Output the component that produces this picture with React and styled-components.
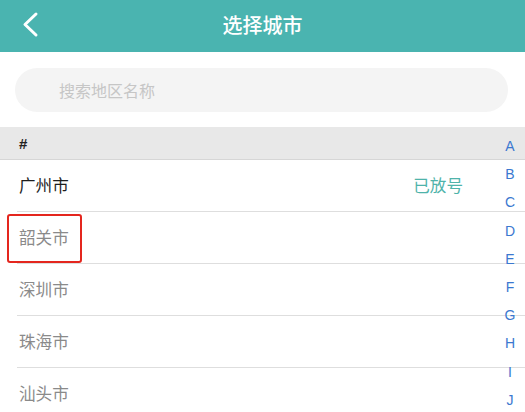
import React from "react";
import styled, { createGlobalStyle } from "styled-components";

const GlobalStyle = createGlobalStyle`
  html, body {
    margin: 0;
    padding: 0;
    background: #fff;
    font-family: "Noto Sans CJK SC", "Noto Sans", sans-serif;
  }
`;

const Page = styled.div`
  position: relative;
  width: 525px;
  height: 412px;
  overflow: hidden;
  background: #fff;
`;

const Header = styled.div`
  height: 52px;
  background: #4ab4b0;
  display: flex;
  align-items: center;
  justify-content: center;
  position: relative;
`;

const BackButton = styled.div`
  position: absolute;
  left: 20px;
  top: 10px;
  width: 22px;
  height: 30px;
`;

const Title = styled.h1`
  margin: 0;
  color: #fff;
  font-size: 20px;
  font-weight: 500;
  line-height: 1;
  padding-bottom: 2px;
`;

const SearchWrap = styled.div`
  padding: 16px 17px 15px 15px;
`;

const SearchBox = styled.div`
  height: 44px;
  border-radius: 22px;
  background: #f4f4f4;
  display: flex;
  align-items: center;
  padding-left: 44px;
  color: #c6c6c6;
  font-size: 16px;
`;

const SectionHeader = styled.div`
  height: 32px;
  background: #e8e8e8;
  border-bottom: 1px solid #d6d6d6;
  display: flex;
  align-items: center;
  padding-left: 19px;
  font-family: "Liberation Sans", sans-serif;
  font-weight: bold;
  font-size: 15px;
  color: #222;
`;

const Row = styled.div`
  position: relative;
  height: 51px;
  margin-left: 17px;
  border-bottom: 1px solid #dedede;
  display: flex;
  align-items: center;
  justify-content: space-between;
  padding-right: 62px;
`;

const CityName = styled.span`
  font-size: 16.6px;
  line-height: 20px;
  margin-left: 2px;
  margin-bottom: 2px;
  color: ${(p) => (p.$active ? "#1e1e1e" : "#8a8a8a")};
`;

const Highlight = styled.span`
  position: absolute;
  left: -10px;
  top: 2px;
  width: 75px;
  height: 49px;
  box-sizing: border-box;
  border: 2.5px solid #e4261e;
  border-radius: 3px;
`;

const Status = styled.span`
  font-size: 16.6px;
  line-height: 20px;
  margin-bottom: 2px;
  color: #4fb3aa;
`;

const IndexBar = styled.div`
  position: absolute;
  right: 5px;
  top: 132px;
  width: 20px;
  display: flex;
  flex-direction: column;
  align-items: center;
`;

const IndexLetter = styled.span`
  height: 28.2px;
  line-height: 28px;
  font-family: "Liberation Sans", sans-serif;
  font-size: 14px;
  color: #3b78d0;
`;

const cities = [
  { name: "广州市", status: "已放号", active: true },
  { name: "韶关市", highlight: true },
  { name: "深圳市" },
  { name: "珠海市" },
  { name: "汕头市" },
];

const letters = ["A", "B", "C", "D", "E", "F", "G", "H", "I", "J"];

const App = () => {
  return (
    <Page>
      <GlobalStyle />
      <Header>
        <BackButton>
          <svg width="22" height="30" viewBox="0 0 22 30">
            <polyline
              points="16,4 5,14.5 16,25"
              fill="none"
              stroke="#fff"
              strokeWidth="3"
              strokeLinecap="round"
              strokeLinejoin="round"
            />
          </svg>
        </BackButton>
        <Title>选择城市</Title>
      </Header>
      <SearchWrap>
        <SearchBox>搜索地区名称</SearchBox>
      </SearchWrap>
      <SectionHeader>#</SectionHeader>
      {cities.map((c) => (
        <Row key={c.name}>
          {c.highlight && <Highlight />}
          <CityName $active={c.active}>{c.name}</CityName>
          {c.status && <Status>{c.status}</Status>}
        </Row>
      ))}
      <IndexBar>
        {letters.map((l) => (
          <IndexLetter key={l}>{l}</IndexLetter>
        ))}
      </IndexBar>
    </Page>
  );
};

export default App;
